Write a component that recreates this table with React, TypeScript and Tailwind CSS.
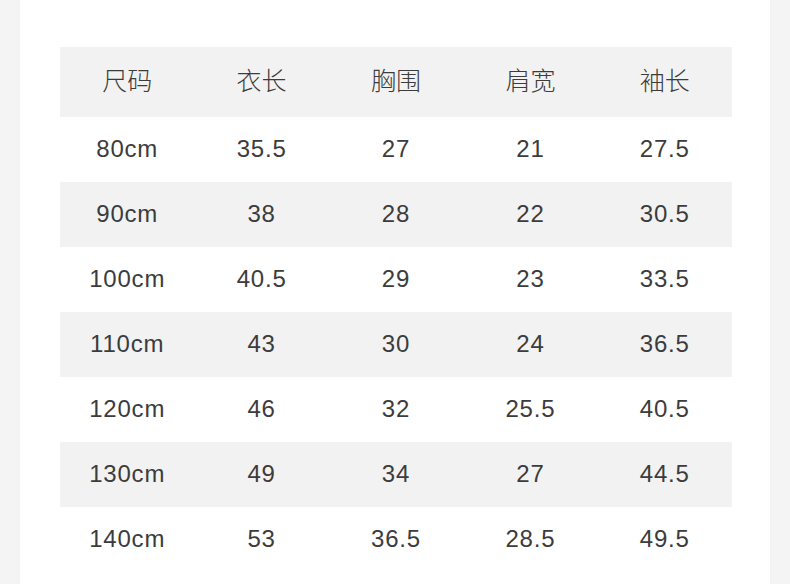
const HEADERS = ['尺码', '衣长', '胸围', '肩宽', '袖长']

const ROWS = [
  ['80cm', '35.5', '27', '21', '27.5'],
  ['90cm', '38', '28', '22', '30.5'],
  ['100cm', '40.5', '29', '23', '33.5'],
  ['110cm', '43', '30', '24', '36.5'],
  ['120cm', '46', '32', '25.5', '40.5'],
  ['130cm', '49', '34', '27', '44.5'],
  ['140cm', '53', '36.5', '28.5', '49.5'],
]

export default function App() {
  return (
    <div className="w-[790px] h-[584px] overflow-hidden bg-[#f4f4f4] px-[20px]">
      <div className="h-full bg-white pl-[40px] pr-[38px] pt-[47px]">
        {/* size table */}
        <div
          className="text-[#3c3c3c]"
          style={{ fontFamily: '"Liberation Sans", "Noto Sans CJK SC", sans-serif' }}
        >
          <div className="grid grid-cols-5 h-[70px] bg-[#f2f2f2] items-center pb-[5px]">
            {HEADERS.map((h) => (
              <div
                key={h}
                className="text-center text-[25px] font-light"
                style={{ fontFamily: '"Noto Sans CJK SC", sans-serif' }}
              >
                {h}
              </div>
            ))}
          </div>
          {ROWS.map((row, i) => (
            <div
              key={row[0]}
              className={`grid grid-cols-5 h-[65px] items-center pb-[2px] ${
                i % 2 === 1 ? 'bg-[#f2f2f2]' : 'bg-white'
              }`}
            >
              {row.map((cell, j) => (
                <div key={j} className="text-center text-[24px] tracking-[0.8px]">
                  {cell}
                </div>
              ))}
            </div>
          ))}
        </div>
      </div>
    </div>
  )
}
